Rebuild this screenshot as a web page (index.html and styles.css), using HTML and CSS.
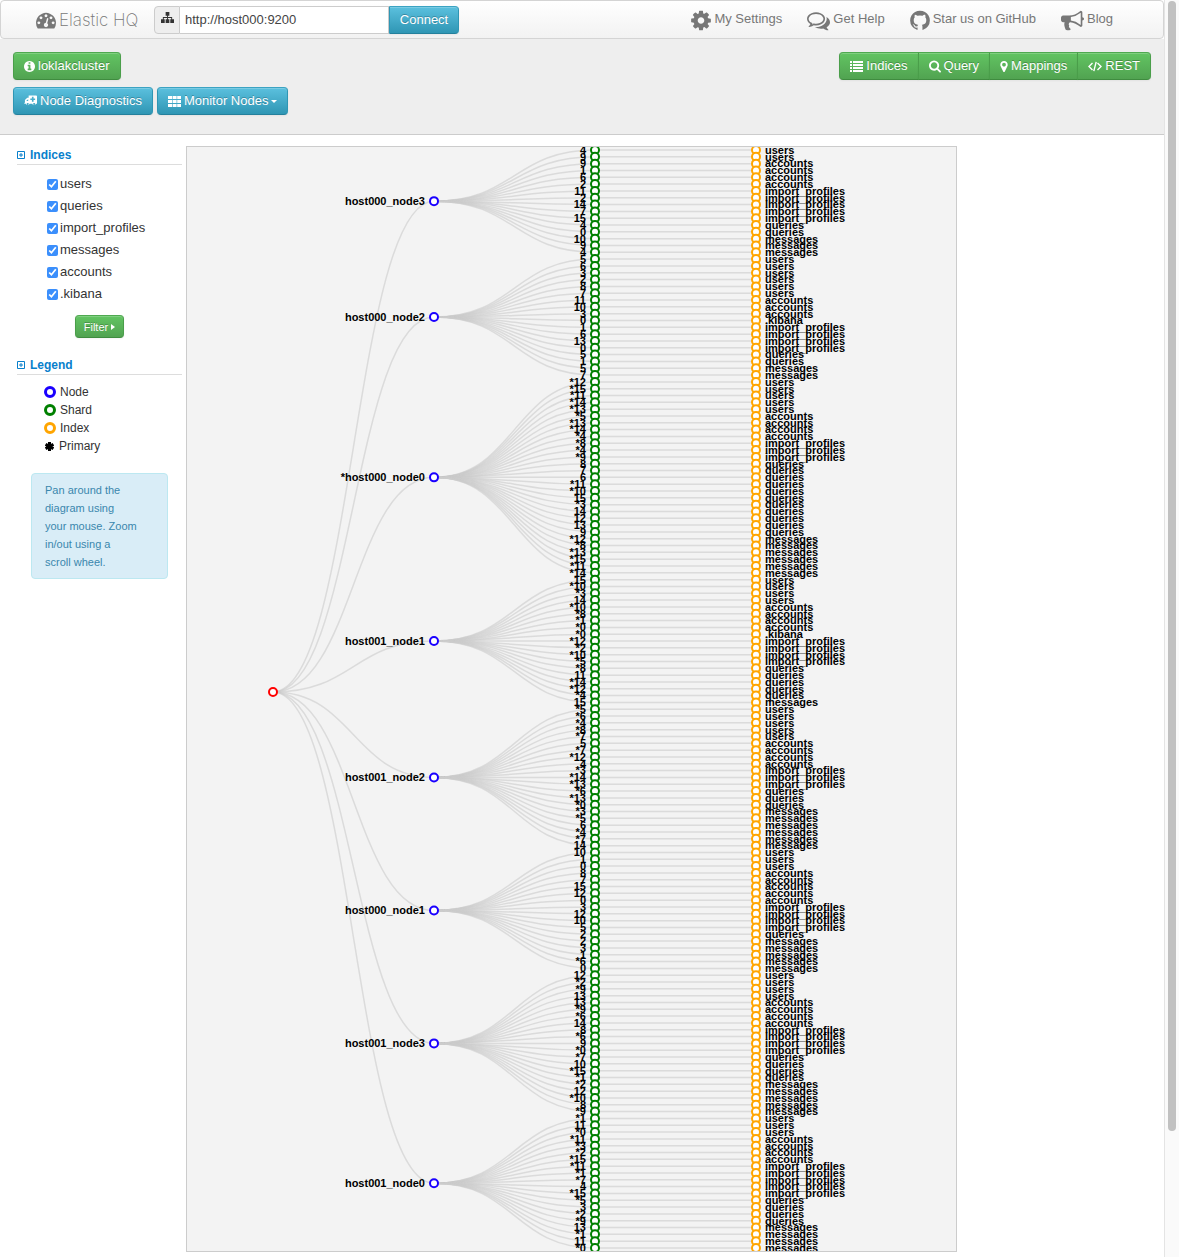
FILE: index.html
```html
<!DOCTYPE html>
<html lang="en">
<head>
<meta charset="utf-8">
<title>Elastic HQ</title>
<link rel="stylesheet" href="styles.css">
</head>
<body>
<div class="page">
  <nav class="navbar">
    <a class="brand" href="#">
      <svg class="icon" width="20" height="20" viewBox="0 0 1792 1792"><path d="M384 1152q0-53-37.5-90.5t-90.5-37.5-90.5 37.5-37.5 90.5 37.5 90.5 90.5 37.5 90.5-37.5 37.5-90.5zm192-448q0-53-37.5-90.5t-90.5-37.5-90.5 37.5-37.5 90.5 37.5 90.5 90.5 37.5 90.5-37.5 37.5-90.5zm428 481l101-382q6-26-7.5-48.5t-38.5-29.5-48 6.5-30 39.5l-101 382q-60 5-107 43.5t-63 98.5q-20 77 20 146t117 89 146-20 89-117q16-60-6-117t-72-91zm660-33q0-53-37.5-90.5t-90.5-37.5-90.5 37.5-37.5 90.5 37.5 90.5 90.5 37.5 90.5-37.5 37.5-90.5zm-640-640q0-53-37.5-90.5t-90.5-37.5-90.5 37.5-37.5 90.5 37.5 90.5 90.5 37.5 90.5-37.5 37.5-90.5zm448 192q0-53-37.5-90.5t-90.5-37.5-90.5 37.5-37.5 90.5 37.5 90.5 90.5 37.5 90.5-37.5 37.5-90.5zm320 448q0 261-141 483-19 29-54 29h-1402q-35 0-54-29-141-221-141-483 0-182 71-348t191-286 286-191 348-71 348 71 286 191 191 286 71 348z"/></svg>
      <span>Elastic HQ</span>
    </a>
    <form class="connect">
      <label class="addon" for="host" aria-label="Cluster address">
        <svg class="icon" width="13" height="13" viewBox="0 0 14 14"><path d="M5 1h4v4H7.500v1.500H12V9h2v4h-4V9h1V7.500H7.500V9H9v4H5V9h1.500V7.500H3V9h1v4H0V9h2V6.500h4.500V5H5z"/></svg>
      </label>
      <input class="host" id="host" type="text" value="http://host000:9200">
      <button class="btn btn-info btn-connect" type="button">Connect</button>
    </form>
    <div class="links">
      <a href="#"><svg class="icon" width="20" height="23" viewBox="128 0 1536 1792"><path d="M1152 896q0-106-75-181t-181-75-181 75-75 181 75 181 181 75 181-75 75-181zm512-109v222q0 12-8 23t-20 13l-185 28q-19 54-39 91 35 50 107 138 10 12 10 25t-9 23q-27 37-99 108t-94 71q-12 0-26-9l-138-108q-44 23-91 38-16 136-29 186-7 28-36 28h-222q-14 0-24.500-8.500t-11.500-21.500l-28-184q-49-16-90-37l-141 107q-10 9-25 9-14 0-25-11-126-114-165-168-7-10-7-23 0-12 8-23 15-21 51-66.500t54-70.500q-27-50-41-99l-183-27q-13-2-21-12.500t-8-23.500v-222q0-12 8-23t19-13l186-28q14-46 39-92-40-57-107-138-10-12-10-24 0-10 9-23 26-36 98.500-107.500t94.500-71.500q13 0 26 10l138 107q44-23 91-38 16-136 29-186 7-28 36-28h222q14 0 24.500 8.500t11.500 21.500l28 184q49 16 90 37l142-107q9-9 24-9 13 0 25 10 129 119 165 170 7 8 7 22 0 12-8 23-15 21-51 66.500t-54 70.500q26 50 41 98l183 28q13 2 21 12.500t8 23.500z"/></svg><span>My Settings</span></a>
      <a href="#"><svg class="icon" width="23" height="23" viewBox="0 0 1792 1792"><path d="M704 384q-153 0-286 52t-211.500 141-78.500 191q0 82 53 158t149 132l97 56-35 84q34-20 62-39l44-31 53 10q78 14 153 14 153 0 286-52t211.500-141 78.500-191-78.500-191-211.500-141-286-52zm0-128q191 0 353.500 68.500t256.500 186.500 94 257-94 257-256.500 186.500-353.500 68.500q-86 0-176-16-124 88-278 128-36 9-86 16h-3q-11 0-20.500-8t-11.500-21q-1-3-1-6.500t.5-6.500 2-6l2.500-5 3.500-5.500 4-5 4.500-5 4-4.500q5-6 23-25t26-29.500 22.500-29 25-38.500 20.500-44q-124-72-195-177t-71-224q0-139 94-257t256.500-186.500 353.500-68.500zm822 1169q10 24 20.500 44t25 38.500 22.500 29 26 29.500 23 25q1 1 4 4.500t4.500 5 4 5 3.500 5.500l2.500 5 2 6 .5 6.500-1 6.500q-3 14-13 22t-22 7q-50-7-86-16-154-40-278-128-90 16-176 16-271 0-472-132 58 4 88 4 161 0 309-45t264-129q125-92 192-212t67-254q0-77-23-152 129 71 204 178t75 230q0 120-71 224.500t-195 176.500z"/></svg><span>Get Help</span></a>
      <a href="#"><svg class="icon" width="20" height="23" viewBox="128 0 1536 1792"><path d="M896 128q209 0 385.500 103t279.500 279.500 103 385.500q0 251-146.500 451.500t-378.500 277.500q-27 5-40-7t-13-30q0-3 .5-76.500t.5-134.500q0-97-52-142 57-6 102.500-18t94-39 81-66.500 53-105 20.500-150.500q0-119-79-206 37-91-8-204-28-9-81 11t-92 44l-38 24q-93-26-192-26t-192 26q-16-11-42.500-27t-83.500-38.500-85-13.500q-45 113-8 204-79 87-79 206 0 85 20.500 150t52.500 105 80.500 67 94 39 102.500 18q-39 36-49 103-21 10-45 15t-57 5-65.500-21.500-55.500-62.500q-19-32-48.500-52t-49.500-24l-20-3q-21 0-29 4.500t-5 11.500 9 14 13 12l7 5q22 10 43.500 38t31.500 51l10 23q13 38 44 61.500t67 30 69.500 7 55.500-3.500l23-4q0 38 .5 88.500t.5 54.500q0 18-13 30t-40 7q-232-77-378.500-277.500t-146.500-451.500q0-209 103-385.500t279.500-279.500 385.500-103z"/></svg><span>Star us on GitHub</span></a>
      <a href="#"><svg class="icon" width="23" height="23" viewBox="0 0 1792 1792"><path d="M1664 640q53 0 90.500 37.500t37.500 90.500-37.500 90.500-90.500 37.500v384q0 52-38 90t-90 38q-417-347-812-380-58 19-91 66t-31 100.500 40 92.500q-20 33-23 65.500t6 58 33.500 55 48 50 61.500 50.500q-29 58-111.500 83t-168.500 11.500-132-55.500q-7-23-29.500-87.500t-32-94.500-23-89-15-101 3.500-98.500 22-110.500h-122q-66 0-113-47t-47-113v-192q0-66 47-113t113-47h480q435 0 896-384 52 0 90 38t38 90v384zm-128 604v-954q-394 302-768 343v270q377 42 768 341z"/></svg><span>Blog</span></a>
    </div>
  </nav>

  <header class="toolbar">
    <div class="toolbar-row">
      <button class="btn btn-success" type="button"><svg class="icon" width="11" height="13" viewBox="128 0 1536 1792"><path d="M1152 1376v-160q0-14-9-23t-23-9h-96v-512q0-14-9-23t-23-9h-320q-14 0-23 9t-9 23v160q0 14 9 23t23 9h96v320h-96q-14 0-23 9t-9 23v160q0 14 9 23t23 9h448q14 0 23-9t9-23zm-128-896v-160q0-14-9-23t-23-9h-192q-14 0-23 9t-9 23v160q0 14 9 23t23 9h192q14 0 23-9t9-23zm640 416q0 209-103 385.500t-279.500 279.500-385.500 103-385.500-103-279.500-279.500-103-385.500 103-385.500 279.500-279.500 385.500-103 385.500 103 279.500 279.500 103 385.500z"/></svg>loklakcluster</button>
      <div class="btn-group">
        <button class="btn btn-success" type="button"><svg class="icon" width="13" height="11" viewBox="0 0 13 11"><path d="M0 0h2v2H0zM3 0h10v2H3zM0 3h2v2H0zM3 3h10v2H3zM0 6h2v2H0zM3 6h10v2H3zM0 9h2v2H0zM3 9h10v2H3z"/></svg>Indices</button>
        <button class="btn btn-success" type="button"><svg class="icon" width="12" height="13" viewBox="64 64 1664 1792"><path d="M1216 832q0-185-131.500-316.500t-316.500-131.500-316.500 131.500-131.500 316.500 131.500 316.500 316.500 131.500 316.500-131.500 131.500-316.500zm512 832q0 52-38 90t-90 38q-54 0-90-38l-343-342q-179 124-399 124-143 0-273.500-55.500t-225-150-150-225-55.500-273.500 55.500-273.500 150-225 225-150 273.500-55.500 273.500 55.500 225 150 150 225 55.500 273.500q0 220-124 399l343 343q37 37 37 90z"/></svg>Query</button>
        <button class="btn btn-success" type="button"><svg class="icon" width="8" height="13" viewBox="384 0 1024 1792"><path d="M1152 640q0-106-75-181t-181-75-181 75-75 181 75 181 181 75 181-75 75-181zm256 0q0 109-33 179l-364 774q-16 33-47.500 52t-67.500 19-67.500-19-46.500-52l-365-774q-33-70-33-179 0-212 150-362t362-150 362 150 150 362z"/></svg>Mappings</button>
        <button class="btn btn-success" type="button"><svg class="icon line code" width="14" height="11" viewBox="0 0 14 11"><path d="M4.500 2 1 5.500 4.500 9M9.500 2 13 5.500 9.500 9M8.200 .8 5.800 10.200"/></svg>REST</button>
      </div>
    </div>
    <div class="toolbar-row">
      <button class="btn btn-info" type="button"><svg class="icon" width="13" height="12" viewBox="0 0 14 12"><path fill-rule="evenodd" d="M5 0h8q1 0 1 1v8h-1.200a2 2 0 0 1-3.900 0H6a2 2 0 0 1-3.900 0H.4V8H1V5L3.500 2.500H5zM4.500 4 2.300 6h2.200zM8.500 1.500v1.700H6.800V5h1.700v1.700h1.800V5H12V3.200h-1.700V1.500zM4 8.200a1 1 0 1 0 .01 0zM10.900 8.200a1 1 0 1 0 .01 0z"/></svg>Node Diagnostics</button>
      <button class="btn btn-info" type="button"><svg class="icon" width="13" height="11" viewBox="0 0 13 11"><path d="M0 0h4v3H0zM4.600 0h4v3h-4zM9.200 0H13v3H9.200zM0 4h4v3H0zM4.600 4h4v3h-4zM9.200 4H13v3H9.200zM0 8h4v3H0zM4.600 8h4v3h-4zM9.200 8H13v3H9.200z"/></svg>Monitor Nodes<span class="caret"></span></button>
    </div>
  </header>

  <main class="main">
    <aside class="sidebar">
      <h2><a href="#"><svg class="icon line" width="8" height="8" viewBox="0 0 8 8"><path d="M.5.5h7v7h-7zM2 4h4M4 2v4"/></svg>Indices</a></h2>
      <form class="filter">
        <label><input type="checkbox" checked>users</label>
        <label><input type="checkbox" checked>queries</label>
        <label><input type="checkbox" checked>import_profiles</label>
        <label><input type="checkbox" checked>messages</label>
        <label><input type="checkbox" checked>accounts</label>
        <label><input type="checkbox" checked>.kibana</label>
        <button class="btn btn-success btn-small" type="button">Filter<span class="caret-right"></span></button>
      </form>
      <h2><a href="#"><svg class="icon line" width="8" height="8" viewBox="0 0 8 8"><path d="M.5.5h7v7h-7zM2 4h4M4 2v4"/></svg>Legend</a></h2>
      <ul class="legend">
        <li><span class="ring ring-node"></span>Node</li>
        <li><span class="ring ring-shard"></span>Shard</li>
        <li><span class="ring ring-index"></span>Index</li>
        <li><svg class="star" width="9" height="9" viewBox="0 0 9 9"><path d="M4.500 0v9M.6 2.250l7.800 4.500M8.400 2.250l-7.800 4.500"/></svg>Primary</li>
      </ul>
      <p class="alert">Pan around the diagram using<br>your mouse. Zoom in/out using a scroll wheel.</p>
    </aside>
    <section class="diagram"><svg id="tree" class="tree"></svg></section>
  </main>
</div>
<div class="scrollbar"><div class="thumb"></div></div>
<script src="tree.js"></script>
</body>
</html>
```
FILE: styles.css
```css
* { box-sizing: border-box; }

body {
  margin: 0;
  display: flex;
  min-height: 100vh;
  background: #fff;
  color: #333;
  font: 13px/18px "Liberation Sans", Arial, sans-serif;
}

button, input { font: inherit; }
a { text-decoration: none; }

.icon { display: block; flex: none; fill: currentColor; }
.icon.line { fill: none; stroke: currentColor; }
.icon.code { stroke-width: 1.4; }

.page { flex: 1; min-width: 0; }

/* top bar */
.navbar {
  display: flex;
  align-items: center;
  height: 39px;
  padding: 0 50px 0 35px;
  border: 1px solid #d4d4d4;
  border-radius: 4px;
  background: linear-gradient(#fff, #f2f2f2);
}
.brand {
  display: flex;
  align-items: center;
  gap: 3px;
  width: 118px;
  color: #777;
  font: 200 17px/20px Inter, "Liberation Sans", sans-serif;
  white-space: nowrap;
}
.connect { display: flex; height: 28px; }
.addon {
  display: flex;
  justify-content: center;
  width: 26px;
  padding-top: 4px;
  border: 1px solid #ccc;
  border-radius: 4px 0 0 4px;
  background: #eee;
}
.host {
  width: 209px;
  padding: 0 5px;
  border: 1px solid #ccc;
  border-left: 0;
  background: #fff;
  color: #444;
}
.links { display: flex; gap: 25px; margin-left: auto; }
.links a {
  display: flex;
  align-items: center;
  gap: 3px;
  color: #777;
  white-space: nowrap;
}
.links .icon { margin-top: 1px; }
.links span { padding-bottom: 2px; }

/* buttons */
.btn {
  display: inline-flex;
  align-items: center;
  justify-content: center;
  gap: 3px;
  height: 28px;
  padding: 0 10px;
  border: 1px solid;
  border-radius: 4px;
  color: #fff;
  text-shadow: 0 -1px 0 rgba(0, 0, 0, .25);
  white-space: nowrap;
  box-shadow: inset 0 1px 0 rgba(255, 255, 255, .2), 0 1px 2px rgba(0, 0, 0, .05);
}
.btn-success {
  background: linear-gradient(#62c462, #51a351);
  border-color: #4fa950 #4a9e4a #3f8c3f;
}
.btn-info {
  background: linear-gradient(#5bc0de, #2f96b4);
  border-color: #3ba3c2 #2f96b4 #24809c;
}
.btn-connect { width: 70px; border-radius: 0 4px 4px 0; }
.btn-small { height: 23px; padding: 0 8px; font-size: 11px; }
.btn-group { display: flex; }
.btn-group .btn { border-radius: 0; }
.btn-group .btn + .btn { margin-left: -1px; }
.btn-group .btn:first-child { border-radius: 4px 0 0 4px; }
.btn-group .btn:last-child { border-radius: 0 4px 4px 0; }
.caret {
  border: 3px solid transparent;
  border-top-color: #fff;
  border-bottom: 0;
}
.caret-right {
  border: 3px solid transparent;
  border-left: 4px solid #fff;
  border-right: 0;
}

/* toolbar */
.toolbar {
  display: flex;
  flex-direction: column;
  gap: 7px;
  padding: 13px 13px 19px;
  border-bottom: 1px solid #ccc;
  background: #eee;
}
.toolbar-row { display: flex; gap: 4px; }
.toolbar-row .btn-group { margin-left: auto; }

/* content */
.main {
  display: grid;
  grid-template-columns: 165px minmax(0, 771px);
  gap: 4px;
  padding: 11px 17px 5px;
}
.sidebar h2 {
  margin: 0;
  border-bottom: 1px solid #ddd;
  font: bold 12px/18px "Liberation Sans", Arial, sans-serif;
}
.sidebar h2 a { display: flex; align-items: center; gap: 5px; color: #0880cc; }
.filter {
  display: flex;
  flex-direction: column;
  margin: 8px 0 18px;
}
.filter label {
  display: flex;
  align-items: center;
  gap: 2px;
  height: 22px;
  padding-left: 30px;
}
.filter input { width: 11px; height: 11px; margin: 0; accent-color: #3b8ffc; }
.filter .btn { align-self: center; margin-top: 10px; }
.legend {
  margin: 8px 0 18px;
  padding: 0 0 0 27px;
  list-style: none;
  font-size: 12px;
}
.legend li { display: flex; align-items: center; gap: 4px; }
.ring { width: 12px; height: 12px; border: 3px solid; border-radius: 50%; }
.ring-node { border-color: #1a00ff; }
.ring-shard { border-color: #008000; }
.ring-index { border-color: #ffa500; }
.star { margin: 0 1px; stroke: #000; stroke-width: 3; }
.alert {
  margin: 0 14px;
  padding: 7px 28px 7px 13px;
  border: 1px solid #bce8f1;
  border-radius: 4px;
  background: #d9edf7;
  color: #3a87ad;
  font-size: 11px;
}

.diagram {
  height: 1106px;
  border: 1px solid #ccc;
  background: #f3f3f3;
  overflow: hidden;
}
.tree { display: block; width: 100%; height: 100%; }
.tree path { fill: none; stroke: #ccc; stroke-width: 1.5px; stroke-opacity: .6; }
.tree circle { fill: #fff; stroke-width: 2px; }
.tree text { fill: #000; font: bold 11px "Liberation Sans", Arial, sans-serif; }
.tree .root { stroke: #f00; }
.tree .node { stroke: #1a00ff; }
.tree .shard { stroke: #008000; }
.tree .index { stroke: #ffa500; }

/* scroll track */
.scrollbar {
  flex: none;
  width: 15px;
  padding: 1px 3px;
  border-left: 1px solid #e4e4e4;
  background: #fafafa;
}
.thumb { width: 8px; height: 90%; border-radius: 4px; background: #c1c1c1; }
```
FILE: tree.js
```js
// Each node: name, shard labels in order, and [index, shard count] runs.
const nodes = [
  ["host000_node3", "4 9 9 1 6 2 11 2 14 7 15 4 0 10 9 4",
    [["users", 2], ["accounts", 4], ["import_profiles", 5], ["queries", 2], ["messages", 3]]],
  ["host000_node2", "5 6 3 2 8 7 11 10 3 0 1 6 13 0 5 1 5 7",
    [["users", 6], ["accounts", 3], [".kibana", 1], ["import_profiles", 4], ["queries", 2], ["messages", 2]]],
  ["*host000_node0", "*12 *15 *11 *14 *13 *5 *13 *14 *4 *8 *4 *9 8 7 6 *11 *10 15 *3 14 12 13 9 *12 *8 *13 *15 *11 *14",
    [["users", 5], ["accounts", 4], ["import_profiles", 3], ["queries", 11], ["messages", 6]]],
  ["host001_node1", "15 *10 *3 14 *10 *8 *1 *0 *0 *12 *2 *10 *5 *8 11 *14 *12 *4 15",
    [["users", 4], ["accounts", 4], [".kibana", 1], ["import_profiles", 4], ["queries", 5], ["messages", 1]]],
  ["host001_node2", "*5 *6 *4 *8 *7 5 *7 *12 4 *3 *14 *13 *6 *13 *0 *3 *5 6 *4 *7 14",
    [["users", 5], ["accounts", 4], ["import_profiles", 3], ["queries", 3], ["messages", 6]]],
  ["host000_node1", "10 1 0 8 7 15 12 0 3 12 10 5 2 2 3 1 *6 0",
    [["users", 3], ["accounts", 5], ["import_profiles", 4], ["queries", 1], ["messages", 5]]],
  ["host001_node3", "12 *2 *9 13 13 *9 *6 14 8 *6 9 *0 *7 10 *15 *1 *2 12 *10 8 *9",
    [["users", 4], ["accounts", 4], ["import_profiles", 4], ["queries", 4], ["messages", 5]]],
  ["host001_node0", "*1 11 *0 *11 *3 *2 *15 *11 *1 *7 4 *15 *5 3 *2 *9 13 *1 11 *0",
    [["users", 3], ["accounts", 4], ["import_profiles", 5], ["queries", 4], ["messages", 4]]]
];

const top0 = 3, bottom = 1101;
const x = { root: 86, node: 247, shard: 408, index: 569 };
const total = nodes.reduce((n, d) => n + d[1].split(" ").length, 0);
const rowY = i => top0 + i * (bottom - top0) / (total - 1);

let links = "", marks = "";
const link = (x0, y0, x1, y1) => {
  const m = (x0 + x1) / 2;
  links += `<path d="M${x0},${y0}C${m},${y0} ${m},${y1} ${x1},${y1}"/>`;
};
const mark = (kind, cy, label) => {
  const after = kind === "index";
  marks += `<circle class="${kind}" cx="${x[kind]}" cy="${cy}" r="4"/>`;
  if (label) {
    marks += `<text x="${x[kind] + (after ? 9 : -9)}" y="${cy}" dy=".35em" text-anchor="${after ? "start" : "end"}">${label}</text>`;
  }
};

let row = 0;
const rootY = 545;
mark("root", rootY);
for (const [name, shardList, runs] of nodes) {
  const shards = shardList.split(" ");
  const indices = runs.flatMap(([label, count]) => Array(count).fill(label));
  const y = rowY(row + (shards.length - 1) / 2);
  link(x.root, rootY, x.node, y);
  mark("node", y, name);
  shards.forEach((shard, i) => {
    const sy = rowY(row + i);
    link(x.node, y, x.shard, sy);
    link(x.shard, sy, x.index, sy);
    mark("shard", sy, shard);
    mark("index", sy, indices[i]);
  });
  row += shards.length;
}
document.getElementById("tree").innerHTML = links + marks;
```
